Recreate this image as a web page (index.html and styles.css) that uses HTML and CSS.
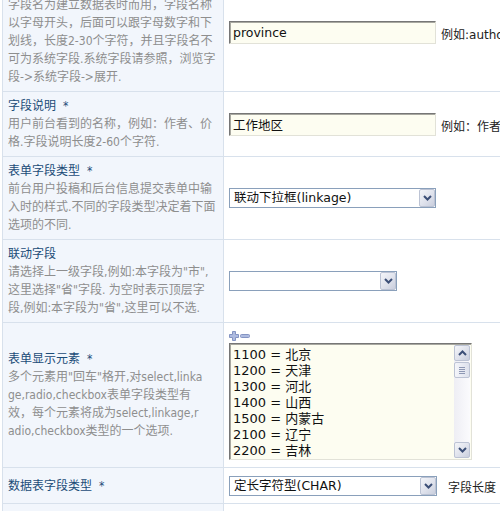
FILE: index.html
```html
<!DOCTYPE html>
<html lang="zh-CN">
<head>
<meta charset="utf-8">
<title>字段设置</title>
<link rel="stylesheet" href="styles.css">
</head>
<body>
<div class="page">
<table class="form">
  <tr>
    <th class="label">
      <div class="title">字段名<span class="req">*</span></div>
      <div class="desc">字段名为建立数据表时而用，字段名称<br>以字母开头，后面可以跟字母数字和下<br>划线，长度2-30个字符，并且字段名不<br>可为系统字段.系统字段请参照，浏览字<br>段-&gt;系统字段-&gt;展开.</div>
    </th>
    <td class="value">
      <div class="field"><input class="text" type="text" value="province"><span class="hint">例如:author</span></div>
    </td>
  </tr>
  <tr>
    <th class="label">
      <div class="title">字段说明<span class="req">*</span></div>
      <div class="desc">用户前台看到的名称，例如：作者、价<br>格.字段说明长度2-60个字符.</div>
    </th>
    <td class="value">
      <div class="field"><input class="text" type="text" value="工作地区"><span class="hint">例如：作者、价格</span></div>
    </td>
  </tr>
  <tr>
    <th class="label">
      <div class="title">表单字段类型<span class="req">*</span></div>
      <div class="desc">前台用户投稿和后台信息提交表单中输<br>入时的样式.不同的字段类型决定着下面<br>选项的不同.</div>
    </th>
    <td class="value">
      <div class="field">
        <div class="select wide"><span class="select-text">联动下拉框(linkage)</span><span class="drop"><svg width="9" height="6" viewBox="0 0 9 6"><path d="M1 1 L4.5 4.5 L8 1" fill="none" stroke="#3c4f77" stroke-width="2"/></svg></span></div>
      </div>
    </td>
  </tr>
  <tr>
    <th class="label">
      <div class="title">联动字段</div>
      <div class="desc">请选择上一级字段,例如:本字段为"市",<br>这里选择"省"字段. 为空时表示顶层字<br>段,例如:本字段为"省",这里可以不选.</div>
    </th>
    <td class="value">
      <div class="field">
        <div class="select short"><span class="select-text"></span><span class="drop"><svg width="9" height="6" viewBox="0 0 9 6"><path d="M1 1 L4.5 4.5 L8 1" fill="none" stroke="#3c4f77" stroke-width="2"/></svg></span></div>
      </div>
    </td>
  </tr>
  <tr>
    <th class="label">
      <div class="title">表单显示元素<span class="req">*</span></div>
      <div class="desc">多个元素用"回车"格开,对select,linka<br>ge,radio,checkbox表单字段类型有<br>效，每个元素将成为select,linkage,r<br>adio,checkbox类型的一个选项.</div>
    </th>
    <td class="value top">
      <div class="tools">
        <svg class="tool" width="10" height="10" viewBox="0 0 10 10"><path d="M3.5 0.5 H6.5 V3.5 H9.5 V6.5 H6.5 V9.5 H3.5 V6.5 H0.5 V3.5 H3.5 Z" fill="#aebbe0" stroke="#8494c2" stroke-width="1" stroke-linejoin="round"/></svg>
        <svg class="tool" width="10" height="10" viewBox="0 0 10 10"><rect x="0.5" y="3.5" width="9" height="3" rx="1" fill="#aebbe0" stroke="#8494c2" stroke-width="1"/></svg>
      </div>
      <div class="textbox">
        <textarea class="options" readonly>1100 = 北京
1200 = 天津
1300 = 河北
1400 = 山西
1500 = 内蒙古
2100 = 辽宁
2200 = 吉林
2300 = 黑龙江
3100 = 上海
3200 = 江苏</textarea>
        <div class="scrollbar">
          <span class="sb-btn"><svg width="9" height="6" viewBox="0 0 9 6"><path d="M1 5 L4.5 1.5 L8 5" fill="none" stroke="#3c4f77" stroke-width="2"/></svg></span>
          <span class="sb-thumb"><i></i><i></i><i></i><i></i></span>
          <span class="sb-track"></span>
          <span class="sb-btn"><svg width="9" height="6" viewBox="0 0 9 6"><path d="M1 1 L4.5 4.5 L8 1" fill="none" stroke="#3c4f77" stroke-width="2"/></svg></span>
        </div>
      </div>
    </td>
  </tr>
  <tr>
    <th class="label">
      <div class="title">数据表字段类型<span class="req">*</span></div>
    </th>
    <td class="value last">
      <div class="field">
        <div class="select wide2"><span class="select-text">定长字符型(CHAR)</span><span class="drop"><svg width="9" height="6" viewBox="0 0 9 6"><path d="M1 1 L4.5 4.5 L8 1" fill="none" stroke="#3c4f77" stroke-width="2"/></svg></span></div>
        <span class="hint gap">字段长度</span>
        <input class="text small" type="text" value="20">
      </div>
    </td>
  </tr>
  <tr>
    <th class="label">
      <div class="title">默认值</div>
      <div class="desc">字段的默认值</div>
    </th>
    <td class="value">
      <div class="field"><input class="text" type="text" value=""></div>
    </td>
  </tr>
</table>
</div>
</body>
</html>
```

FILE: styles.css
```css
html, body {
  margin: 0;
  padding: 0;
  overflow: hidden;
  background: #ffffff;
}

body {
  font-family: "DejaVu Sans", "Noto Sans CJK SC", sans-serif;
  font-size: 12px;
  line-height: 18px;
  color: #222222;
}

.page {
  margin: -27px 0 0 2px;
}

.form {
  border-collapse: separate;
  border-spacing: 0;
  border-left: 1px solid #d8e1ec;
}

.label {
  width: 210px;
  min-width: 210px;
  padding: 5px;
  background: #f2f6fc;
  border-right: 1px solid #d8e1ec;
  border-bottom: 1px solid #d8e1ec;
  text-align: left;
  font-weight: normal;
  vertical-align: middle;
  white-space: nowrap;
  font-family: "DejaVu Sans Condensed", "DejaVu Sans", "Noto Sans CJK SC", sans-serif;
}

.title {
  width: 210px;
  color: #1b4c78;
}

.req {
  margin-left: 7px;
}

.desc {
  width: 210px;
  color: #8e8e8e;
}

.value {
  padding: 5px;
  border-bottom: 1px solid #d8e1ec;
  vertical-align: middle;
  white-space: nowrap;
}

.value.top {
  vertical-align: top;
  padding: 7px 5px;
}

.value.last {
  padding: 6px 5px;
}

.field {
  display: flex;
  align-items: flex-end;
  gap: 5px;
}

.text {
  box-sizing: border-box;
  width: 207px;
  height: 23px;
  margin: 0;
  padding: 1px 3px 0;
  border: 1px solid;
  border-color: #767676 #e2e2d8 #e2e2d8 #767676;
  box-shadow: inset 1px 1px 0 #a8a8a0;
  background: #fdfdf1;
  font-family: "DejaVu Sans", "Noto Sans CJK SC", sans-serif;
  font-size: 12.5px;
  color: #111111;
  outline: none;
}

.text.small {
  width: 60px;
  margin-left: 4px;
}

.hint {
  color: #222222;
  line-height: 18px;
}

.hint.gap {
  margin-left: 6px;
}

.select {
  box-sizing: border-box;
  display: flex;
  align-items: stretch;
  height: 20px;
  border: 1px solid #8aa0bb;
  background: #ffffff;
}

.select.wide { width: 207px; }
.select.short { width: 168px; }
.select.wide2 { width: 208px; margin-bottom: 1px; }

.select-text {
  flex: 1;
  padding-left: 4px;
  line-height: 18px;
  font-size: 12.5px;
  color: #111111;
}

.drop, .sb-btn {
  box-sizing: border-box;
  width: 16px;
  display: flex;
  align-items: center;
  justify-content: center;
  border: 1px solid #bcc3d4;
  border-radius: 2px;
  background: linear-gradient(135deg, #f4f5f9 0%, #dfe2ec 55%, #c9cedd 100%);
}

.tools {
  display: flex;
  align-items: center;
  gap: 1px;
  height: 13px;
  padding-bottom: 1px;
  box-sizing: border-box;
}

.tool {
  display: block;
}

.textbox {
  box-sizing: border-box;
  display: flex;
  width: 243px;
  height: 117px;
  border: 1px solid;
  border-color: #767676 #e2e2d8 #e2e2d8 #767676;
  box-shadow: inset 1px 1px 0 #a8a8a0;
  background: #fdfdf1;
}

.options {
  flex: 1;
  min-width: 0;
  margin: 0;
  padding: 3px 3px 0;
  border: none;
  background: transparent;
  resize: none;
  overflow: hidden;
  outline: none;
  font-family: "DejaVu Sans", "Noto Sans CJK SC", sans-serif;
  font-size: 13px;
  line-height: 16px;
  color: #111111;
}

.scrollbar {
  display: flex;
  flex-direction: column;
  width: 16px;
  margin: 1px 1px 1px 0;
  background: linear-gradient(90deg, #eeeef4, #fbfbfd);
}

.sb-btn {
  height: 16px;
  flex: none;
}

.sb-thumb {
  box-sizing: border-box;
  height: 16px;
  margin-top: 1px;
  display: flex;
  flex-direction: column;
  align-items: center;
  justify-content: center;
  gap: 1px;
  border: 1px solid #bcc3d4;
  border-radius: 2px;
  background: linear-gradient(90deg, #f4f5fa, #dde1ec);
}

.sb-thumb i {
  display: block;
  width: 6px;
  height: 1px;
  background: #8e98b4;
}

.sb-track {
  flex: 1;
}
```
